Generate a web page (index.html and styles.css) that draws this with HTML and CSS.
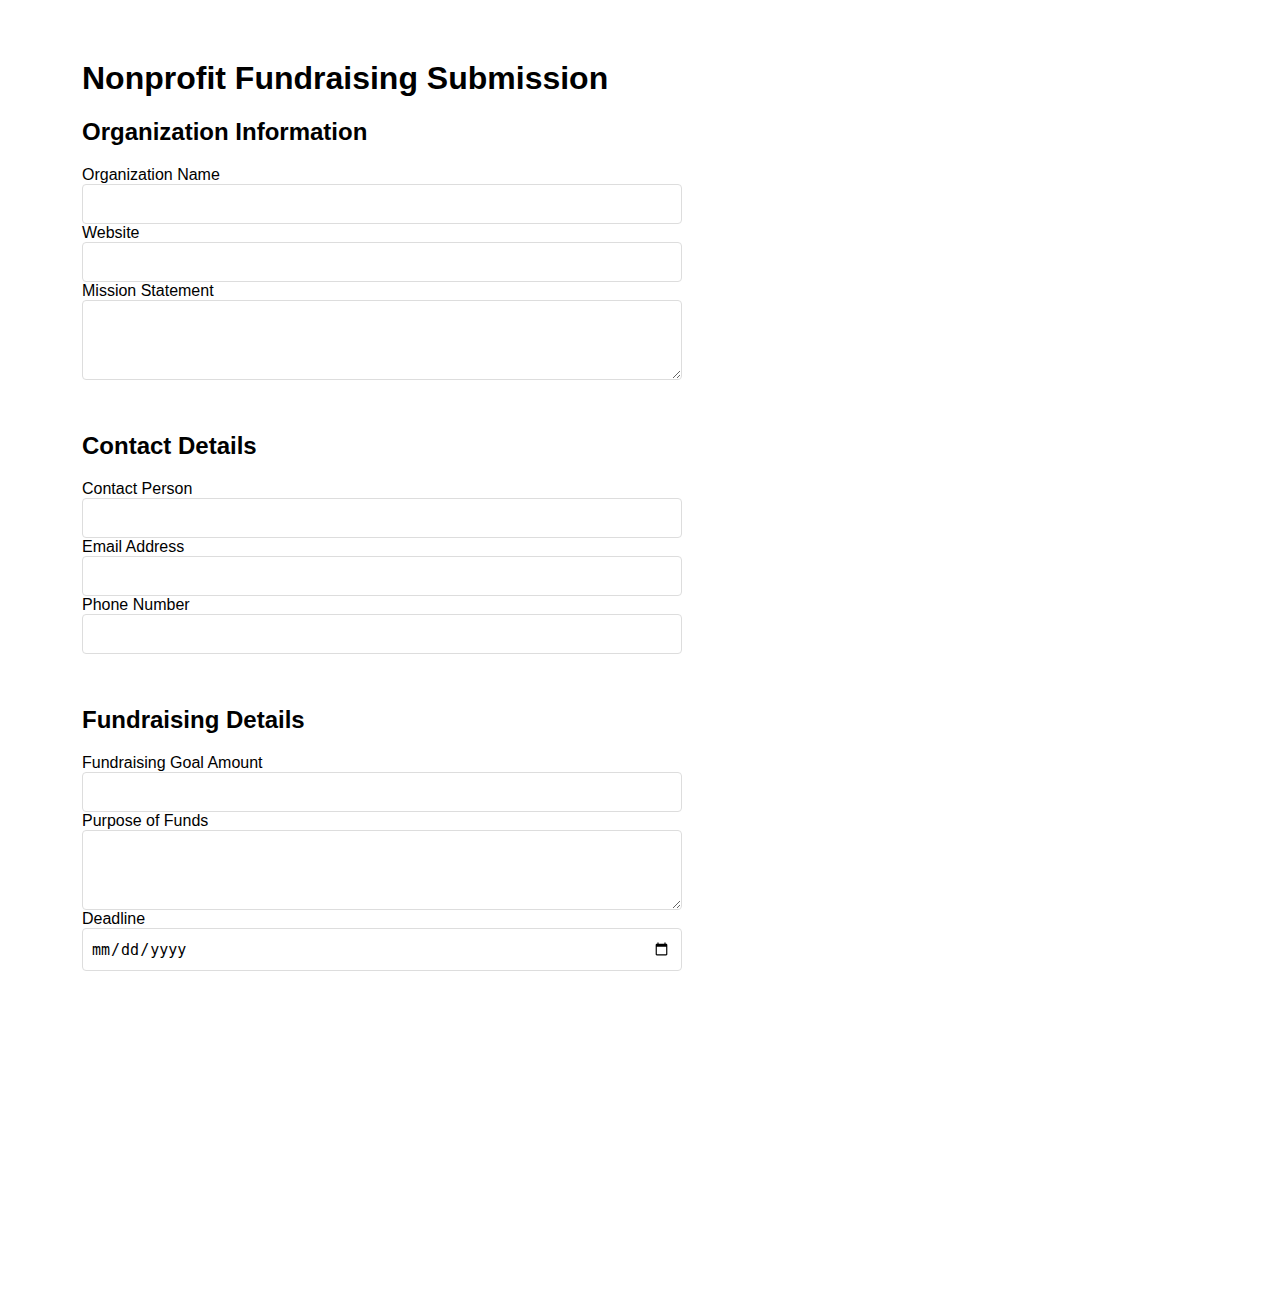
FILE: index.html
```html
<!DOCTYPE html>
<html>
<head>
    <title>Nonprofit Fundraising Submission</title>
    <link rel="stylesheet" href="styles.css">
</head>
<body>
    <div class="container">
        <h1>Nonprofit Fundraising Submission</h1>
        <form>
            <section class="form-section">
                <h2>Organization Information</h2>
                <label for="org-name">Organization Name</label>
                <input type="text" id="org-name" name="org_name">
                <label for="website">Website</label>
                <input type="url" id="website" name="website">
                <label for="mission">Mission Statement</label>
                <textarea id="mission" name="mission"></textarea>
            </section>

            <section class="form-section">
                <h2>Contact Details</h2>
                <label for="contact-person">Contact Person</label>
                <input type="text" id="contact-person" name="contact_person">
                <label for="email">Email Address</label>
                <input type="email" id="email" name="email">
                <label for="phone">Phone Number</label>
                <input type="tel" id="phone" name="phone">
            </section>

            <section class="form-section">
                <h2>Fundraising Details</h2>
                <label for="goal">Fundraising Goal Amount</label>
                <input type="number" id="goal" name="goal">
                <label for="purpose">Purpose of Funds</label>
                <textarea id="purpose" name="purpose"></textarea>
                <label for="deadline">Deadline</label>
                <input type="date" id="deadline" name="deadline">
            </section>
        </form>
    </div>
</body>
</html>
```

FILE: styles.css
```css
body {
    font-family: "Liberation Sans", Arial, sans-serif;
    margin: 0;
    background: white;
    color: black;
}
.container {
    max-width: 600px;
    padding: 39px 82px;
}
h1 {
    font-size: 32px;
    margin: 21px 0;
}
h2 {
    font-size: 24px;
    margin: 0 0 20px;
}
.form-section + .form-section {
    margin-top: 52px;
}
label {
    display: block;
    font-size: 16px;
    line-height: 18px;
}
input,
textarea {
    display: block;
    width: 100%;
    box-sizing: border-box;
    padding: 10px;
    border: 1px solid #ddd;
    border-radius: 4px;
    margin: 0;
}
input {
    height: 40px;
}
input[type="date"] {
    height: 43px;
    padding-left: 8px;
    font-size: 15px;
}
textarea {
    height: 80px;
}
```
